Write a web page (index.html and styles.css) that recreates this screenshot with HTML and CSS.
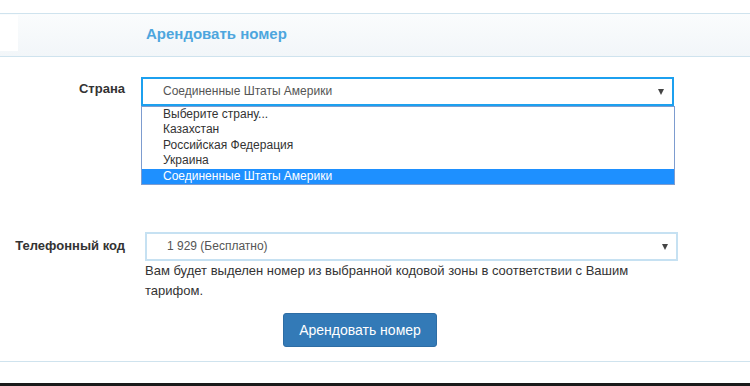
FILE: index.html
```html
<!DOCTYPE html>
<html lang="ru">
<head>
    <meta charset="UTF-8">
    <title>Арендовать номер</title>
    <link rel="stylesheet" href="styles.css">
</head>
<body>
    <div class="page">
        <div class="panel-heading">
            <span class="corner"></span>
            <h3>Арендовать номер</h3>
        </div>

        <form class="rent-form">
            <div class="row row-country">
                <label>Страна</label>
                <div class="control">
                    <div class="select select-focus">Соединенные Штаты Америки</div>
                    <ul class="dropdown">
                        <li>Выберите страну...</li>
                        <li>Казахстан</li>
                        <li>Российская Федерация</li>
                        <li>Украина</li>
                        <li class="selected">Соединенные Штаты Америки</li>
                    </ul>
                </div>
            </div>

            <div class="row row-code">
                <label>Телефонный код</label>
                <div class="control">
                    <div class="select">1 929 (Бесплатно)</div>
                    <p class="help">Вам будет выделен номер из выбранной кодовой зоны в соответствии с Вашим тарифом.</p>
                    <button type="button" class="btn">Арендовать номер</button>
                </div>
            </div>
        </form>

        <div class="panel-footer"></div>
    </div>
</body>
</html>
```

FILE: styles.css
```css
body {
    margin: 0;
    font-family: "Liberation Sans", Arial, sans-serif;
    color: #333;
    background: #fff;
}

.page {
    height: 383px;
    border-bottom: 3px solid #1a1a1a;
    overflow: hidden;
}

.panel-heading {
    margin-top: 13px;
    height: 42px;
    display: flex;
    align-items: center;
    border-top: 1px solid #cfe3ee;
    border-bottom: 1px solid #cfe3ee;
    background: linear-gradient(#fafcfd, #f2f6f9);
}

.corner {
    align-self: flex-start;
    margin-top: 1px;
    width: 18px;
    height: 36px;
    background: #fff;
}

.panel-heading h3 {
    margin: 0 0 3px 128px;
    font-size: 15px;
    font-weight: bold;
    color: #4da6de;
}

.rent-form {
    padding-top: 20px;
}

.row {
    display: grid;
    grid-template-columns: 125px 533px;
    column-gap: 20px;
}

.row label {
    text-align: right;
    font-size: 13px;
    font-weight: bold;
    color: #333;
    padding-top: 4px;
}

.row-country .control {
    position: relative;
    width: 533px;
    margin-left: -4px;
}

.row-code {
    margin-top: 126px;
}

.row-code label {
    padding-top: 6px;
}

.select {
    position: relative;
    height: 25px;
    line-height: 25px;
    padding-left: 20px;
    font-size: 12px;
    color: #555;
    border: 2px solid #c6e1f2;
}

.select::after {
    content: "";
    position: absolute;
    right: 8px;
    top: 10px;
    border-left: 3.5px solid transparent;
    border-right: 3.5px solid transparent;
    border-top: 6px solid #444;
}

.select-focus {
    border-color: #1ca0ef;
}

.dropdown {
    position: absolute;
    left: 0;
    top: 29px;
    width: 532px;
    margin: 0;
    padding: 0;
    list-style: none;
    background: #fff;
    border: 1px solid #7d9ccf;
    font-size: 12px;
    color: #333;
}

.dropdown li {
    line-height: 15.4px;
    padding-left: 21px;
}

.dropdown .selected {
    background: #1e90ff;
    color: #fff;
}

.help {
    margin: 0;
    font-size: 13px;
    line-height: 20px;
    color: #333;
}

.btn {
    margin: 12px 0 0 138px;
    width: 154px;
    height: 34px;
    font-family: inherit;
    font-size: 14px;
    color: #fff;
    background: #337ab7;
    border: 1px solid #2e6da4;
    border-radius: 3px;
}

.panel-footer {
    margin-top: 14px;
    border-top: 1px solid #cfe3ee;
}
```
